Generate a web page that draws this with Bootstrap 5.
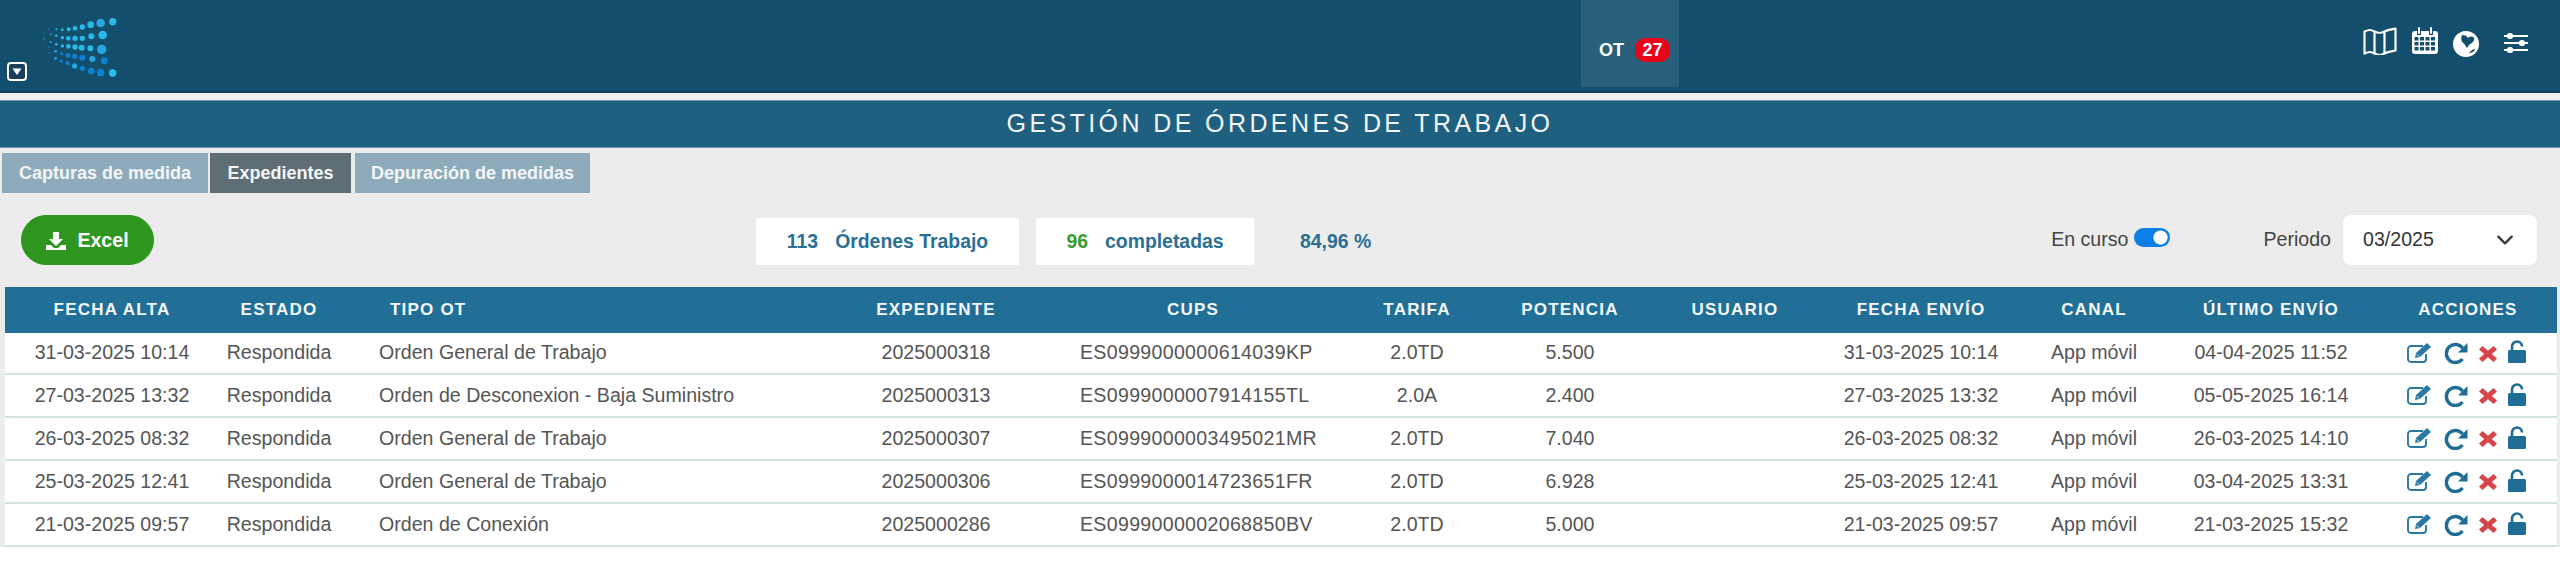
<!DOCTYPE html>
<html lang="es">
<head>
    <meta charset="UTF-8">
    <title>Gestión de Órdenes de Trabajo</title>
    <link href="https://cdn.jsdelivr.net/npm/bootstrap@5.3.0/dist/css/bootstrap.min.css" rel="stylesheet">
    <style>
        body {
            background-color: #ffffff;
            font-family: "Liberation Sans", Arial, sans-serif;
            font-size: 19.6px;
            color: #555;
        }

        /* top bar */
        .app-head {
            height: 93px;
            background-color: #134f6c;
            border-bottom: 2px solid #0f4560;
            padding: 0;
            align-items: flex-start;
            flex-wrap: nowrap;
            justify-content: flex-start;
        }
        .brand-zone {
            width: 1581px;
            height: 91px;
            padding: 17px 0 0 7px;
        }
        .drop-btn {
            width: 20px;
            height: 19px;
            margin-top: 45px;
            margin-right: 12px;
        }
        .ot-tab {
            width: 98px;
            height: 87px;
            padding: 38px 0 0 18px;
            background-color: #285f7b;
            color: #fff;
            font-weight: 700;
            font-size: 18px;
            line-height: 24px;
            gap: 11px;
        }
        .ot-count {
            width: 35px;
            height: 24px;
            border-radius: 10px;
            background-color: #e8051a;
            font-size: 18px;
            line-height: 24px;
            text-align: center;
        }
        .head-icons {
            margin-left: auto;
            margin-right: 32px;
            margin-top: 27px;
            color: #fff;
        }
        .head-icons svg {
            display: block;
        }
        .cal-ic { margin-left: 14px; }
        .globe-ic { margin: 4px 0 0 14px; }
        .slider-ic { margin: 6px 0 0 25px; }

        .head-gap {
            height: 7px;
            background-color: #f3f1f0;
        }

        .title-bar {
            height: 48px;
            background-color: #1f5f80;
            border-top: 1px solid #6d97ad;
            border-bottom: 1px solid #6d97ad;
            color: #f2f6f8;
            font-size: 25px;
            line-height: 45px;
            letter-spacing: 3.4px;
            text-align: center;
        }

        /* work area */
        .work-area {
            height: 399px;
            background-color: #ececec;
            padding-top: 5px;
        }
        .sub-tabs {
            padding-left: 2px;
            height: 40px;
        }
        .sub-tab {
            height: 40px;
            line-height: 40px;
            text-align: center;
            font-size: 18px;
            font-weight: 700;
            color: #f4f7f8;
            background-color: #8eabbb;
        }
        .sub-tab.tab-a { width: 206px; margin-right: 2px; }
        .sub-tab.tab-b { width: 141px; margin-right: 4px; background-color: #5f6d75; }
        .sub-tab.tab-c { width: 235px; }

        .tool-row {
            height: 50px;
            margin: 22px 0;
            padding-left: 21px;
        }
        .xl-btn {
            width: 133px;
            height: 50px;
            padding: 2px 0 0;
            gap: 11px;
            background-color: #2e961f;
            border-color: #2e961f;
            font-size: 19.6px;
            font-weight: 700;
        }
        .stat-box {
            height: 47px;
            margin-top: 3px;
            background-color: #fff;
            color: #2a6f96;
            font-weight: 700;
            font-size: 19.4px;
            gap: 17px;
        }
        .stat-one { width: 263px; margin-left: 602px; }
        .stat-two { width: 218px; margin-left: 17px; }
        .stat-pct {
            margin-left: 46px;
            margin-top: 3px;
            line-height: 47px;
            color: #2a6f96;
            font-weight: 700;
            font-size: 19.4px;
        }
        .num-ok { color: #3a9c2c; }
        .right-tools {
            margin-left: auto;
            margin-right: 23px;
            color: #444;
        }
        .run-switch {
            padding: 0;
            margin: 0 93px 0 6px;
            min-height: 0;
            height: 19px;
            position: relative;
            top: -3px;
        }
        .run-switch .form-check-input {
            width: 36px;
            height: 19px;
            margin: 0;
            float: none;
            display: block;
            border: 0;
            background-color: #0d7ee8;
        }
        .period-select {
            width: 194px;
            height: 50px;
            margin-left: 12px;
            padding: 0 20px;
            border: 0;
            border-radius: 8px;
            font-size: 19.6px;
            color: #333;
            background-position: right 20px center;
            background-size: 24px 18px;
        }

        /* table */
        .ot-wrap {
            padding: 0 3px 0 5px;
        }
        .ot-table {
            width: 2552px;
            table-layout: fixed;
            margin: 0;
            font-size: 19.6px;
        }
        .ot-table > thead > tr > th {
            height: 46px;
            padding: 0;
            background-color: #216f96;
            color: #f4f8fa;
            border: 0;
            font-size: 17px;
            font-weight: 700;
            letter-spacing: 1.2px;
            text-align: center;
            vertical-align: middle;
        }
        .ot-table > tbody > tr > td {
            height: 43px;
            padding: 0;
            background-color: #fff;
            color: #555;
            border-bottom: 2px solid #d3e2e3;
            text-align: center;
            vertical-align: middle;
            white-space: nowrap;
        }
        .ot-table > tbody > tr:first-child > td { height: 41px; }
        .ot-table > thead > tr > th.left-tipo { text-align: left; padding-left: 51px; }
        .ot-table > tbody > tr > td.left-tipo { text-align: left; padding-left: 40px; }
        .ot-table > tbody > tr > td.left-cups { text-align: left; padding-left: 41px; letter-spacing: .3px; }

        col.w1 { width: 214px; }
        col.w2 { width: 120px; }
        col.w3 { width: 494px; }
        col.w4 { width: 206px; }
        col.w5 { width: 308px; }
        col.w6 { width: 140px; }
        col.w7 { width: 166px; }
        col.w8 { width: 164px; }
        col.w9 { width: 208px; }
        col.w10 { width: 138px; }
        col.w11 { width: 216px; }
        col.w12 { width: 178px; }

        .act-icons {
            height: 24px;
            padding-left: 28px;
            gap: 11px;
        }
        .act-icons svg { display: block; flex: none; }
        .act-icons .act-edit { margin-bottom: 2px; }
        .act-icons .act-del { margin-top: 1px; }
        .act-icons .act-lock { margin-bottom: 3px; }
    </style>
</head>
<body>
    <svg width="0" height="0" class="position-absolute">
        <symbol id="ic-edit" viewBox="0 0 26 21">
            <path d="M19 12v5a3 3 0 0 1-3 3H4a3 3 0 0 1-3-3V7a3 3 0 0 1 3-3h12" fill="none" stroke="#2a79a3" stroke-width="1.9"/>
            <path d="M8 16l1-5L20 1l4 4L13 15z" fill="#2a79a3"/>
            <path d="M10 12.500l2 2" stroke="#fff" stroke-width="1"/>
        </symbol>
        <symbol id="ic-redo" viewBox="0 0 24 22">
            <path d="M18.500 6A9 9 0 1 0 18.500 17" fill="none" stroke="#1f6d95" stroke-width="3.400"/>
            <path d="M23.500 1v9.500H14z" fill="#1f6d95"/>
        </symbol>
        <symbol id="ic-del" viewBox="0 0 18 16">
            <path d="M3.500 0L9 4.800 14.500 0 18 3.500 12.800 8 18 12.500 14.500 16 9 11.200 3.500 16 0 12.500 5.200 8 0 3.500z" fill="#d4464a"/>
        </symbol>
        <symbol id="ic-lock" viewBox="0 0 19 23">
            <path d="M4 11V6.500a5 5 0 0 1 10 0" fill="none" stroke="#1f6d95" stroke-width="2.600"/>
            <rect x="0" y="10" width="18" height="13" rx="1.500" fill="#1f6d95"/>
        </symbol>
    </svg>

    <nav class="navbar app-head">
        <div class="brand-zone d-flex">
            <svg class="drop-btn" viewBox="0 0 20 19">
                <rect x="1" y="1" width="18" height="17" rx="3" fill="#1a3f5c" stroke="#fff" stroke-width="2"/>
                <path d="M5.500 6.500h9L10 13z" fill="#fff"/>
            </svg>
            <svg width="80" height="62" viewBox="120 50 240 186">
                <g fill="#29b9e8">
                    <circle cx="135" cy="82" r="1.500" fill="#1c7fb8"/><circle cx="150" cy="85" r="2" fill="#1c86c0"/><circle cx="172" cy="87" r="3"/><circle cx="190" cy="88" r="4"/><circle cx="209" cy="87" r="6"/><circle cx="228" cy="84" r="7"/><circle cx="250" cy="80" r="8"/><circle cx="275" cy="73" r="10"/><circle cx="305" cy="68" r="13" fill="#2aa5df"/><circle cx="341" cy="64" r="11"/>
                    <circle cx="135" cy="98" r="2" fill="#1c7fb8"/><circle cx="155" cy="102" r="2.500"/><circle cx="172" cy="106" r="3.500"/><circle cx="190" cy="112" r="5"/><circle cx="208" cy="114" r="7"/><circle cx="228" cy="114" r="8"/><circle cx="250" cy="114" r="8"/><circle cx="277" cy="108" r="9"/><circle cx="311" cy="104" r="13"/>
                    <circle cx="135" cy="115" r="3" fill="#1c7fb8"/><circle cx="155" cy="125" r="3"/><circle cx="172" cy="132" r="4"/><circle cx="190" cy="137" r="5"/><circle cx="208" cy="138" r="7"/><circle cx="228" cy="140" r="8"/><circle cx="248" cy="142" r="9"/><circle cx="274" cy="144" r="9"/><circle cx="308" cy="147" r="14" fill="#27a6e0"/>
                </g>
                <g fill="#0c82d2">
                    <circle cx="135" cy="128" r="2"/><circle cx="150" cy="140" r="2.500"/><circle cx="170" cy="153" r="4" fill="#27a6e0"/><circle cx="188" cy="160" r="4.500"/><circle cx="207" cy="165" r="7"/><circle cx="227" cy="168" r="8"/><circle cx="250" cy="172" r="9"/><circle cx="280" cy="176" r="9" fill="#27a6e0"/><circle cx="316" cy="181" r="10"/>
                    <circle cx="135" cy="145" r="1.500"/><circle cx="150" cy="158" r="2"/><circle cx="170" cy="174" r="4" fill="#27a6e0"/><circle cx="187" cy="182" r="5"/><circle cx="206" cy="189" r="6"/><circle cx="227" cy="197" r="8" fill="#27a6e0"/><circle cx="250" cy="204" r="8"/><circle cx="277" cy="212" r="10"/><circle cx="305" cy="217" r="11"/><circle cx="341" cy="218" r="11" fill="#2ac0ee"/>
                </g>
            </svg>
        </div>
        <div class="ot-tab d-flex">
            <span>OT</span>
            <span class="ot-count">27</span>
        </div>
        <div class="head-icons d-flex align-items-start">
            <svg width="34" height="28" viewBox="0 0 34 28" fill="none" stroke="#fff" stroke-width="2.200" stroke-linejoin="round">
                <path d="M1.500 4.500c5-2 6-2 10 0 4 2 6 2 10 0 4-2 6-2 11-3v22c-5 1-7 1-11 3-4 2-6 2-10 0-4-2-5-2-10 0z"/>
                <path d="M11.500 4.500v22M21.500 4.500v22"/>
            </svg>
            <svg class="cal-ic" width="28" height="28" viewBox="0 0 28 28">
                <rect x="1" y="4" width="26" height="23" rx="3" fill="#fff"/>
                <g fill="#134f6c">
                    <rect x="3.500" y="10" width="4" height="3.500"/><rect x="9" y="10" width="4" height="3.500"/><rect x="14.500" y="10" width="4" height="3.500"/><rect x="20" y="10" width="4" height="3.500"/>
                    <rect x="3.500" y="15" width="4" height="3.500"/><rect x="9" y="15" width="4" height="3.500"/><rect x="14.500" y="15" width="4" height="3.500"/><rect x="20" y="15" width="4" height="3.500"/>
                    <rect x="3.500" y="20" width="4" height="3.500"/><rect x="9" y="20" width="4" height="3.500"/><rect x="14.500" y="20" width="4" height="3.500"/><rect x="20" y="20" width="4" height="3.500"/>
                    <rect x="6" y="0" width="4" height="8"/><rect x="18" y="0" width="4" height="8"/>
                </g>
                <rect x="7" y="0" width="2" height="7" rx="1" fill="#fff"/><rect x="19" y="0" width="2" height="7" rx="1" fill="#fff"/>
            </svg>
            <svg class="globe-ic" width="26" height="26" viewBox="0 0 26 26">
                <circle cx="13" cy="13" r="13" fill="#fff"/>
                <path d="M9 4c3 0 5 1 6 3 2-2 5-2 6 0 1 3-2 5-5 7l-2 3c-2-3-3-5-5-6-1-2-1-5 0-7z" fill="#134f6c"/>
                <path d="M16 22l3-3 3-1c0 2-3 4-6 4z" fill="#134f6c"/>
            </svg>
            <svg class="slider-ic" width="24" height="20" viewBox="0 0 24 20" fill="#fff">
                <rect x="0" y="2" width="24" height="2"/><rect x="0" y="9" width="24" height="2"/><rect x="0" y="16" width="24" height="2"/>
                <rect x="3" y="0" width="6" height="6" rx="2.500"/><rect x="15" y="7" width="6" height="6" rx="2.500"/><rect x="3" y="14" width="6" height="6" rx="2.500"/>
            </svg>
        </div>
    </nav>
    <div class="head-gap"></div>
    <div class="title-bar">GESTIÓN DE ÓRDENES DE TRABAJO</div>

    <main class="work-area">
        <div class="sub-tabs d-flex">
            <div class="sub-tab tab-a">Capturas de medida</div>
            <div class="sub-tab tab-b">Expedientes</div>
            <div class="sub-tab tab-c">Depuración de medidas</div>
        </div>

        <div class="tool-row d-flex">
            <button type="button" class="btn btn-success rounded-pill xl-btn d-flex align-items-center justify-content-center">
                <svg width="20" height="18" viewBox="0 0 20 18" fill="#fff">
                    <path d="M7 0h6v7h4l-7 7-7-7h4z"/>
                    <path d="M0 13h5l3 3h4l3-3h5v5H0z"/>
                </svg>
                Excel
            </button>
            <div class="stat-box stat-one d-flex align-items-center justify-content-center"><span>113</span><span>Órdenes Trabajo</span></div>
            <div class="stat-box stat-two d-flex align-items-center justify-content-center"><span class="num-ok">96</span><span>completadas</span></div>
            <div class="stat-pct">84,96 %</div>
            <div class="right-tools d-flex align-items-center">
                <label for="enCurso">En curso</label>
                <div class="form-check form-switch run-switch">
                    <input class="form-check-input" type="checkbox" role="switch" id="enCurso" checked>
                </div>
                <label for="periodo">Periodo</label>
                <select id="periodo" class="form-select period-select">
                    <option>03/2025</option>
                </select>
            </div>
        </div>

        <div class="ot-wrap">
            <table class="table ot-table">
                <colgroup>
                    <col class="w1"><col class="w2"><col class="w3"><col class="w4"><col class="w5"><col class="w6">
                    <col class="w7"><col class="w8"><col class="w9"><col class="w10"><col class="w11"><col class="w12">
                </colgroup>
                <thead>
                    <tr>
                        <th>FECHA ALTA</th>
                        <th>ESTADO</th>
                        <th class="left-tipo">TIPO OT</th>
                        <th>EXPEDIENTE</th>
                        <th>CUPS</th>
                        <th>TARIFA</th>
                        <th>POTENCIA</th>
                        <th>USUARIO</th>
                        <th>FECHA ENVÍO</th>
                        <th>CANAL</th>
                        <th>ÚLTIMO ENVÍO</th>
                        <th>ACCIONES</th>
                    </tr>
                </thead>
                <tbody id="otRows"></tbody>
            </table>
        </div>
    </main>

    <script src="https://cdn.jsdelivr.net/npm/bootstrap@5.3.0/dist/js/bootstrap.bundle.min.js"></script>
    <script>
        const rows = [
            ["31-03-2025 10:14", "Orden General de Trabajo", "2025000318", "ES0999000000614039KP", "2.0TD", "5.500", "04-04-2025 11:52"],
            ["27-03-2025 13:32", "Orden de Desconexion - Baja Suministro", "2025000313", "ES0999000007914155TL", "2.0A", "2.400", "05-05-2025 16:14"],
            ["26-03-2025 08:32", "Orden General de Trabajo", "2025000307", "ES0999000003495021MR", "2.0TD", "7.040", "26-03-2025 14:10"],
            ["25-03-2025 12:41", "Orden General de Trabajo", "2025000306", "ES0999000014723651FR", "2.0TD", "6.928", "03-04-2025 13:31"],
            ["21-03-2025 09:57", "Orden de Conexión", "2025000286", "ES0999000002068850BV", "2.0TD", "5.000", "21-03-2025 15:32"]
        ];

        const actions = `
            <div class="act-icons d-flex align-items-center">
                <svg class="act-edit" width="26" height="21"><use href="#ic-edit"/></svg>
                <svg width="24" height="22"><use href="#ic-redo"/></svg>
                <svg class="act-del" width="18" height="16"><use href="#ic-del"/></svg>
                <svg class="act-lock" width="19" height="23"><use href="#ic-lock"/></svg>
            </div>`;

        document.getElementById("otRows").innerHTML = rows.map((r) => `
            <tr>
                <td>${r[0]}</td>
                <td>Respondida</td>
                <td class="left-tipo">${r[1]}</td>
                <td>${r[2]}</td>
                <td class="left-cups">${r[3]}</td>
                <td>${r[4]}</td>
                <td>${r[5]}</td>
                <td></td>
                <td>${r[0]}</td>
                <td>App móvil</td>
                <td>${r[6]}</td>
                <td>${actions}</td>
            </tr>`).join("");
    </script>
</body>
</html>
